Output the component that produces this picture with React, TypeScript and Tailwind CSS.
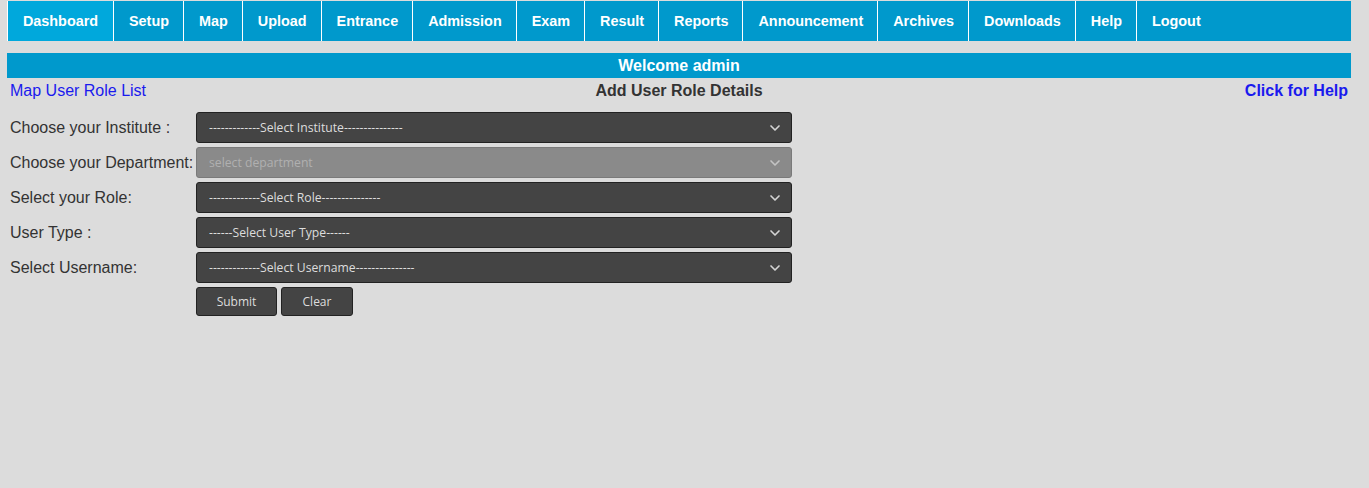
import { ChevronDown } from "lucide-react";

const navItems = [
  "Dashboard",
  "Setup",
  "Map",
  "Upload",
  "Entrance",
  "Admission",
  "Exam",
  "Result",
  "Reports",
  "Announcement",
  "Archives",
  "Downloads",
  "Help",
  "Logout",
];

const fields = [
  { label: "Choose your Institute :", placeholder: "-------------Select Institute---------------" },
  { label: "Choose your Department:", placeholder: "select department", disabled: true },
  { label: "Select your Role:", placeholder: "-------------Select Role---------------" },
  { label: "User Type :", placeholder: "------Select User Type------" },
  { label: "Select Username:", placeholder: "-------------Select Username---------------" },
];

function Dropdown({ placeholder, disabled }: { placeholder: string; disabled?: boolean }) {
  return (
    <div className="relative w-[596px] h-[31px]">
      <select
        disabled={disabled}
        className={
          "appearance-none w-full h-full rounded-[3px] border pl-[12px] pr-8 pt-[1px] text-[12.2px] outline-none font-['Open_Sans',sans-serif] " +
          (disabled
            ? "bg-[#8a8a8a] border-[#7a7a7a] text-[#b0b0b0]"
            : "bg-[#444444] border-[#222222] text-[#dddddd]")
        }
      >
        <option>{placeholder}</option>
      </select>
      <ChevronDown
        size={16}
        strokeWidth={2.5}
        className={
          "absolute right-[9px] top-[8px] pointer-events-none " +
          (disabled ? "text-[#c4c4c4]" : "text-[#d4d4d4]")
        }
      />
    </div>
  );
}

export default function App() {
  return (
    <div className="w-full h-[488px] bg-[#dcdcdc] font-['Liberation_Sans',Arial,sans-serif]">
      <div className="ml-[7px] w-[1344px] pt-[1px]">
        {/* top menu */}
        <ul className="flex h-[40px] bg-[#0099cc]">
          {navItems.map((item, i) => (
            <li
              key={item}
              className={
                "flex items-center pt-[2px] pl-[15px] pr-[14px] border-l border-white text-white font-bold text-[14.4px] " +
                (i === 0 ? "bg-[#00a8dc] w-[106px] justify-center !px-0" : "")
              }
            >
              {item}
            </li>
          ))}
        </ul>

        <div className="mt-[12px] h-[25px] bg-[#0099cc] flex items-center justify-center text-white font-bold text-[16px]">
          Welcome admin
        </div>

        <div className="grid grid-cols-3 items-center h-[26px] px-[3px] text-[16px]">
          <a className="text-[#1a1aee] cursor-pointer">Map User Role List</a>
          <div className="text-center font-bold text-[#333333]">Add User Role Details</div>
          <a className="text-right font-bold text-[#1a1aee] cursor-pointer">Click for Help</a>
        </div>

        {/* form */}
        <div className="mt-[8px] px-[3px] flex flex-col gap-[4px]">
          {fields.map((f) => (
            <div key={f.label} className="flex items-center">
              <label className="w-[186px] text-[16px] text-[#333333] whitespace-nowrap">{f.label}</label>
              <Dropdown placeholder={f.placeholder} disabled={f.disabled} />
            </div>
          ))}
          <div className="flex items-center pl-[186px] gap-[4px]">
            <button className="w-[81px] h-[29px] rounded-[3px] border border-[#222222] bg-[#444444] text-[#dddddd] text-[12px] font-['Open_Sans',sans-serif]">
              Submit
            </button>
            <button className="w-[72px] h-[29px] rounded-[3px] border border-[#222222] bg-[#444444] text-[#dddddd] text-[12px] font-['Open_Sans',sans-serif]">
              Clear
            </button>
          </div>
        </div>
      </div>
    </div>
  );
}
